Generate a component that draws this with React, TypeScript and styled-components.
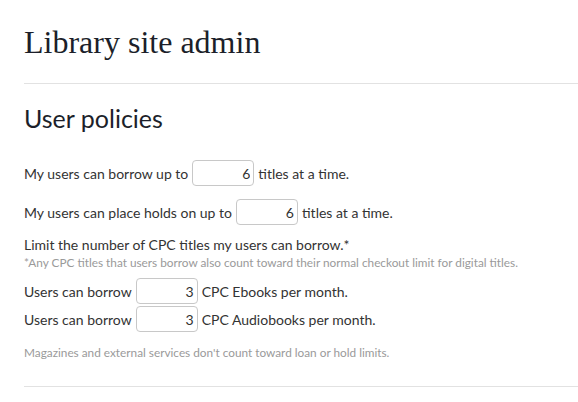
import React from 'react';
import styled, { createGlobalStyle } from 'styled-components';

const GlobalStyle = createGlobalStyle`
  body {
    margin: 0;
    background: #fff;
    font-family: Lato, "Open Sans", sans-serif;
    color: #333;
  }
`;

const Page = styled.div`
  padding: 24px 0 0 24px;
`;

const SiteTitle = styled.h1`
  margin: 0;
  font-family: "Liberation Serif", "DejaVu Serif", serif;
  font-weight: 400;
  font-size: 32px;
  line-height: 36px;
  color: #1c1f2a;
`;

const Rule = styled.hr<{ $top: number }>`
  border: 0;
  border-top: 1px solid #e2e2e2;
  margin: ${(p) => p.$top}px 0 0;
`;

const SectionTitle = styled.h2`
  margin: 19px 0 0;
  font-weight: 400;
  font-size: 25px;
  line-height: 30px;
  color: #1c1f2a;
`;

const Row = styled.div<{ $top: number }>`
  display: flex;
  align-items: center;
  gap: 4px;
  margin-top: ${(p) => p.$top}px;
  font-size: 14px;
  color: #333;
`;

const NumberBox = styled.input`
  box-sizing: border-box;
  width: 62px;
  height: 26px;
  border: 1px solid #c8c8c8;
  border-radius: 4px;
  padding: 0 3px 0 0;
  text-align: right;
  font-family: inherit;
  font-size: 14px;
  color: #333;
  background: #fff;
`;

const Lead = styled.div`
  margin-top: 12px;
  font-size: 14px;
  line-height: 16px;
  color: #333;
`;

const Note = styled.div<{ $top: number }>`
  margin-top: ${(p) => p.$top}px;
  font-size: 11.8px;
  line-height: 14px;
  color: #9a9a9a;
`;

const limits = [
  { before: 'My users can borrow up to', after: 'titles at a time.', value: 6, top: 27 },
  { before: 'My users can place holds on up to', after: 'titles at a time.', value: 6, top: 13 },
];

const cpc = [
  { before: 'Users can borrow', after: 'CPC Ebooks per month.', value: 3, top: 8 },
  { before: 'Users can borrow', after: 'CPC Audiobooks per month.', value: 3, top: 2 },
];

export default function App() {
  return (
    <>
      <GlobalStyle />
      <Page>
        <SiteTitle>Library site admin</SiteTitle>
        <Rule $top={23} />
        <SectionTitle>User policies</SectionTitle>
        {limits.map((l, i) => (
          <Row key={`l-${i}`} $top={l.top}>
            <span>{l.before}</span>
            <NumberBox defaultValue={l.value} />
            <span>{l.after}</span>
          </Row>
        ))}
        <Lead>Limit the number of CPC titles my users can borrow.*</Lead>
        <Note $top={3}>*Any CPC titles that users borrow also count toward their normal checkout limit for digital titles.</Note>
        {cpc.map((c, i) => (
          <Row key={`c-${i}`} $top={c.top}>
            <span>{c.before}</span>
            <NumberBox defaultValue={c.value} />
            <span>{c.after}</span>
          </Row>
        ))}
        <Note $top={14}>Magazines and external services don't count toward loan or hold limits.</Note>
        <Rule $top={26} />
      </Page>
    </>
  );
}
